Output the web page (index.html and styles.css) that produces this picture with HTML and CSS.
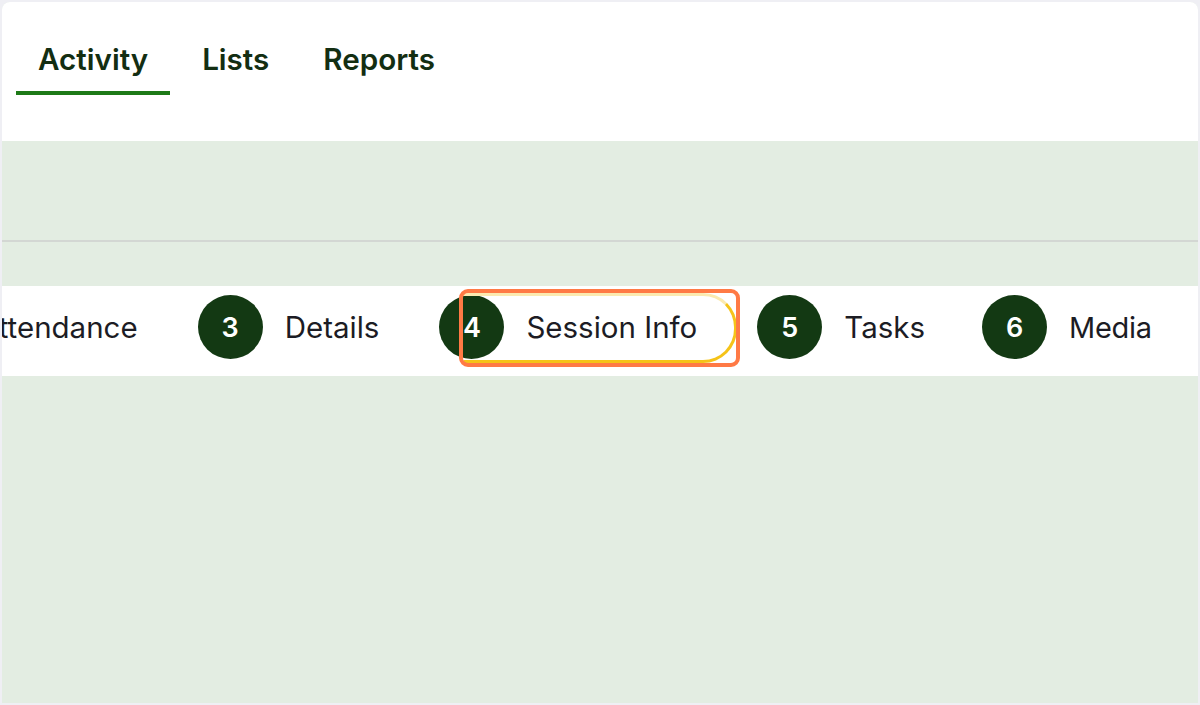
FILE: index.html
```html
<!DOCTYPE html>
<html lang="en">
<head>
<meta charset="utf-8">
<title>Activity</title>
<link rel="stylesheet" href="styles.css">
</head>
<body>
<div class="frame">
  <header class="header">
    <nav class="tabs">
      <a class="tab tab-active">Activity</a>
      <a class="tab">Lists</a>
      <a class="tab">Reports</a>
    </nav>
  </header>
  <main class="content">
    <div class="rule"></div>
    <div class="stepper">
      <ol class="steps">
        <li class="step"><span class="num">1</span><span class="label">Overview</span></li>
        <li class="step"><span class="num">2</span><span class="label">Attendance</span></li>
        <li class="step"><span class="num">3</span><span class="label">Details</span></li>
        <li class="step step-focus"><span class="num">4</span><span class="label">Session Info</span><span class="focus-ring"></span><span class="highlight"></span></li>
        <li class="step"><span class="num">5</span><span class="label">Tasks</span></li>
        <li class="step"><span class="num">6</span><span class="label">Media</span></li>
      </ol>
    </div>
  </main>
</div>
</body>
</html>
```

FILE: styles.css
```css
* { box-sizing: border-box; }
html, body { margin: 0; padding: 0; }
body {
  background: #efeff4;
  font-family: Inter, "Noto Sans", sans-serif;
  width: 1200px;
  height: 705px;
  overflow: hidden;
}
.frame {
  margin: 2px 2px 0 2px;
  height: 701px;
  border-radius: 8px 8px 0 0;
  overflow: hidden;
  background: #e3ede2;
  display: flex;
  flex-direction: column;
}
.header {
  background: #ffffff;
  height: 139px;
  flex: none;
}
.tabs {
  display: flex;
  gap: 10px;
  padding: 36px 0 0 14px;
}
.tab {
  display: block;
  padding: 0 22px;
  height: 57px;
  line-height: 42px;
  font-size: 29.6px;
  font-weight: 600;
  color: #132e12;
  border-bottom: 4px solid transparent;
}
.tab-active { border-bottom-color: #1d7a17; }
.content {
  flex: 1;
  padding-top: 99px;
}
.rule {
  height: 2px;
  background: #d3d7d3;
}
.stepper {
  margin-top: 44px;
  height: 90px;
  padding-bottom: 8px;
  background: #ffffff;
  overflow: hidden;
  display: flex;
  align-items: center;
}
.steps {
  list-style: none;
  margin: 0 0 0 -389px;
  padding: 0;
  display: flex;
  align-items: center;
  gap: 60px;
  flex: none;
}
.step {
  position: relative;
  display: flex;
  align-items: center;
  gap: 22px;
  flex: none;
}
.num {
  width: 65px;
  height: 64px;
  border-radius: 50%;
  background: #133913;
  color: #ffffff;
  font-size: 27px;
  font-weight: 600;
  display: flex;
  align-items: center;
  justify-content: center;
  flex: none;
}
.label {
  font-size: 29.5px;
  font-weight: 400;
  color: #1c1c24;
  white-space: nowrap;
}
.step:last-child .label { font-size: 29px; letter-spacing: -0.3px; }
.step:last-child { margin-left: -3px; }
.step-focus .num { position: relative; z-index: 0; }
.focus-ring {
  position: absolute;
  left: 22px;
  right: -40px;
  top: -2px;
  bottom: -4px;
  border: 3px solid transparent;
  border-right-color: #f5c318;
  border-top-color: #fbeab0;
  border-bottom-color: #f5c318;
  border-radius: 0 34px 34px 0;
  pointer-events: none;
}
.highlight {
  position: absolute;
  left: 20px;
  right: -43px;
  top: -6px;
  bottom: -8px;
  border: 4px solid #ff7a45;
  border-radius: 9px;
  pointer-events: none;
}
```
